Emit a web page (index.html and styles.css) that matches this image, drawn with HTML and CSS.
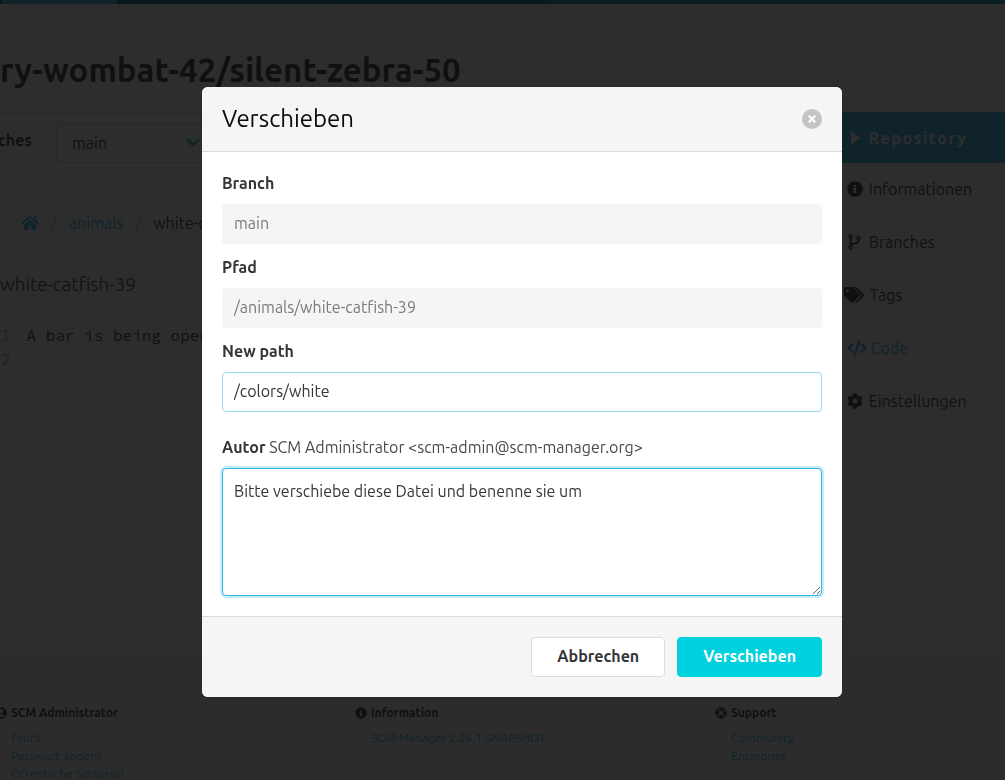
FILE: index.html
```html
<!DOCTYPE html>
<html lang="de">
<head>
<meta charset="utf-8">
<meta name="viewport" content="width=device-width, initial-scale=1">
<title>Verschieben</title>
<link rel="stylesheet" href="styles.css">
</head>
<body>
<div class="page">
  <div class="topbar"><div class="topbar-active"></div></div>
  <main class="main">
    <h1 class="title">ry-wombat-42/silent-zebra-50</h1>
    <div class="columns">
      <div class="content">
        <div class="branchbar">
          <label class="branch-label" for="branch-select">ches</label>
          <div class="select-wrap">
            <select class="branch-select" id="branch-select"><option>main</option></select>
            <svg class="chevron" viewBox="0 0 14 10" aria-hidden="true"><path d="M2 2.2 7 7.2 12 2.2" fill="none" stroke="currentColor" stroke-width="3" stroke-linecap="round" stroke-linejoin="round"/></svg>
          </div>
        </div>
        <section class="panel">
          <nav class="breadcrumb">
            <a href="#" aria-label="Start"><svg class="home" viewBox="0 0 576 512" aria-hidden="true"><path fill="currentColor" d="M280.4 148.300 96 300.100V464a16 16 0 0 0 16 16l112-.3a16 16 0 0 0 16-16V368a16 16 0 0 1 16-16h64a16 16 0 0 1 16 16v95.600a16 16 0 0 0 16 16l112 .4a16 16 0 0 0 16-16V300L295.700 148.300a12.200 12.200 0 0 0-15.300 0zM571.600 251.500 488 182.600V44a12 12 0 0 0-12-12h-56a12 12 0 0 0-12 12v72.600L318.500 43a48 48 0 0 0-61 0L4.300 251.500a12 12 0 0 0-1.600 16.900l25.500 31a12 12 0 0 0 16.900 1.600l235.200-193.700a12.200 12.200 0 0 1 15.300 0L530.900 301a12 12 0 0 0 16.900-1.600l25.500-31a12 12 0 0 0-1.700-16.900z"/></svg></a>
            <span class="slash">/</span>
            <a href="#">animals</a>
            <span class="slash">/</span>
            <span>white-catfish-39</span>
          </nav>
          <h2 class="filename">white-catfish-39</h2>
          <ol class="code">
            <li class="code-line"><span class="lineno">1</span><code>A bar is being opened</code></li>
            <li class="code-line"><span class="lineno">2</span><code></code></li>
          </ol>
        </section>
      </div>
      <aside class="sidebar">
        <h2 class="menu-title"><svg class="caret" viewBox="0 0 9 14" aria-hidden="true"><path fill="currentColor" d="M0 1v12q0 1 1 .6L8.500 7.600q.5-.6 0-1.200L1 .4Q0 0 0 1z"/></svg>Repository</h2>
        <nav class="menu">
          <a class="menu-item" href="#"><svg class="icon" viewBox="0 0 512 512" aria-hidden="true"><path fill="currentColor" d="M256 8a248 248 0 1 0 0 496 248 248 0 0 0 0-496zm0 110a42 42 0 1 1 0 84 42 42 0 0 1 0-84zm56 254a12 12 0 0 1-12 12h-88a12 12 0 0 1-12-12v-24a12 12 0 0 1 12-12h12v-64h-12a12 12 0 0 1-12-12v-24a12 12 0 0 1 12-12h64a12 12 0 0 1 12 12v100h12a12 12 0 0 1 12 12z"/></svg>Informationen</a>
          <a class="menu-item" href="#"><svg class="icon" viewBox="0 0 512 512" aria-hidden="true"><g fill="none" stroke="currentColor" stroke-width="46"><circle cx="116" cy="80" r="50"/><circle cx="116" cy="432" r="50"/><circle cx="366" cy="144" r="50"/><path stroke-width="60" d="M116 130v250M366 194c0 100-65 92-118 104-60 12-132 20-132 82"/></g></svg>Branches</a>
          <a class="menu-item" href="#"><svg class="icon icon-tags" viewBox="0 0 640 512" aria-hidden="true"><path fill="currentColor" d="M497.900 225.900 286 14.100A48 48 0 0 0 252.100 0H48A48 48 0 0 0 0 48v204.100a48 48 0 0 0 14.100 33.900l211.800 211.900a48 48 0 0 0 67.900 0l204.100-204.100a48 48 0 0 0 0-67.900zM112 160a48 48 0 1 1 0-96 48 48 0 0 1 0 96zm513.900 133.800L421.800 497.900a48 48 0 0 1-67.800 0l-.4-.4L527.600 323.500a70 70 0 0 0 0-99L303.100 0H380.100A48 48 0 0 1 414 14.100l211.900 211.800a48 48 0 0 1 0 67.900z"/></svg>Tags</a>
          <a class="menu-item menu-item-active" href="#"><svg class="icon icon-code" viewBox="0 0 640 512" aria-hidden="true"><path fill="none" stroke="currentColor" stroke-width="76" stroke-linecap="round" stroke-linejoin="round" d="M170 140 45 256l125 116M470 140l125 116-125 116M385 40 255 472"/></svg>Code</a>
          <a class="menu-item" href="#"><svg class="icon" viewBox="0 0 512 512" aria-hidden="true"><path fill="currentColor" d="M487.400 315.700 444.800 291.100a192 192 0 0 0 0-70.200l42.600-24.600a12 12 0 0 0 5.500-14c-11.100-35.600-30-67.800-54.700-94.600a12 12 0 0 0-14.800-2.300l-42.600 24.600a189 189 0 0 0-60.800-35.100V25.800a12 12 0 0 0-9.400-11.700 250 250 0 0 0-109.200 0 12 12 0 0 0-9.400 11.700V75a195 195 0 0 0-60.800 35.100L88.700 85.500a12 12 0 0 0-14.800 2.300A247 247 0 0 0 19.200 182.400a12 12 0 0 0 5.500 14L67.300 221a192 192 0 0 0 0 70.200l-42.600 24.600a12 12 0 0 0-5.500 14c11.100 35.600 30 67.800 54.700 94.600a12 12 0 0 0 14.800 2.300l42.600-24.600a189 189 0 0 0 60.800 35.100v49.200a12 12 0 0 0 9.400 11.700 250 250 0 0 0 109.200 0 12 12 0 0 0 9.400-11.700v-49.200a195 195 0 0 0 60.800-35.100l42.600 24.600a12 12 0 0 0 14.800-2.300 247 247 0 0 0 54.700-94.600 12 12 0 0 0-5.100-14.100zM256 336a80 80 0 1 1 0-160 80 80 0 0 1 0 160z"/></svg>Einstellungen</a>
        </nav>
      </aside>
    </div>
  </main>
  <footer class="footer">
    <section class="footer-col">
      <h3 class="footer-title"><svg class="footer-icon" viewBox="0 0 496 512" aria-hidden="true"><path fill="currentColor" fill-rule="evenodd" d="M248 8a248 248 0 1 0 0 496 248 248 0 0 0 0-496zm0 80a92 92 0 1 1 0 184 92 92 0 0 1 0-184zM110 370q20-60 75-60 63 20 126 0 55 0 75 60-50 70-138 70t-138-70z"/></svg>SCM Administrator</h3>
      <a href="#">Profil</a>
      <a href="#">Passwort ändern</a>
      <a href="#">Öffentliche Schlüssel</a>
    </section>
    <section class="footer-col">
      <h3 class="footer-title"><svg class="footer-icon" viewBox="0 0 512 512" aria-hidden="true"><path fill="currentColor" d="M256 8a248 248 0 1 0 0 496 248 248 0 0 0 0-496zm0 110a42 42 0 1 1 0 84 42 42 0 0 1 0-84zm56 254a12 12 0 0 1-12 12h-88a12 12 0 0 1-12-12v-24a12 12 0 0 1 12-12h12v-64h-12a12 12 0 0 1-12-12v-24a12 12 0 0 1 12-12h64a12 12 0 0 1 12 12v100h12a12 12 0 0 1 12 12z"/></svg>Information</h3>
      <a href="#">SCM-Manager 2.26.1-SNAPSHOT</a>
    </section>
    <section class="footer-col footer-col-last">
      <h3 class="footer-title"><svg class="footer-icon" viewBox="0 0 512 512" aria-hidden="true"><circle cx="256" cy="256" r="164" fill="none" stroke="currentColor" stroke-width="136" stroke-dasharray="190 67.600" stroke-dashoffset="95"/><circle cx="256" cy="256" r="230" fill="none" stroke="currentColor" stroke-width="36"/><circle cx="256" cy="256" r="112" fill="none" stroke="currentColor" stroke-width="32"/></svg>Support</h3>
      <a href="#">Community</a>
      <a href="#">Enterprise</a>
    </section>
  </footer>
</div>
<div class="overlay">
  <form class="modal" role="dialog" aria-modal="true" aria-labelledby="modal-title">
    <header class="modal-head">
      <h2 class="modal-title" id="modal-title">Verschieben</h2>
      <button class="close" type="button" aria-label="Schließen"><svg viewBox="0 0 20 20" aria-hidden="true"><path d="M6.800 6.800 13.200 13.200M13.200 6.800 6.800 13.200" stroke="currentColor" stroke-width="2"/></svg></button>
    </header>
    <div class="modal-body">
      <div class="field">
        <label class="label" for="branch">Branch</label>
        <input class="input" id="branch" type="text" value="main" disabled>
      </div>
      <div class="field">
        <label class="label" for="path">Pfad</label>
        <input class="input" id="path" type="text" value="/animals/white-catfish-39" disabled>
      </div>
      <div class="field">
        <label class="label" for="new-path">New path</label>
        <input class="input" id="new-path" type="text" value="/colors/white">
      </div>
      <div class="commit">
        <label class="author" for="message"><strong>Autor</strong> SCM Administrator &lt;scm-admin@scm-manager.org&gt;</label>
        <textarea class="input message" id="message" rows="4">Bitte verschiebe diese Datei und benenne sie um</textarea>
      </div>
    </div>
    <footer class="modal-foot">
      <button class="button" type="button">Abbrechen</button>
      <button class="button button-primary" type="submit">Verschieben</button>
    </footer>
  </form>
</div>
<script src="focus.js"></script>
</body>
</html>
```
FILE: focus.js
```js
const message = document.getElementById("message");
message.focus();
message.setSelectionRange(message.value.length, message.value.length);
```
FILE: styles.css
```css
* { box-sizing: border-box; }

body {
  margin: 0;
  height: 100vh;
  overflow: hidden;
  background: #fff;
  color: #363636;
  font: 16px/24px Ubuntu, "Noto Sans", sans-serif;
}

h1, h2, h3 { margin: 0; }
a { color: #33b2e8; text-decoration: none; }
input, select, textarea, button { font: inherit; }

.topbar { height: 4px; padding-left: 2px; background: linear-gradient(90deg, #0a5a66, #0d9aa0); }
.topbar-active { width: 115px; height: 4px; background: #33b2e8; }

.main { padding-top: 48px; min-height: 651px; }
.title { font-size: 33px; line-height: 36px; font-weight: 700; color: #363636; }
.columns { display: flex; gap: 24px; margin-top: 24px; }
.content { flex: 1; min-width: 0; }

.branchbar {
  display: flex;
  align-items: center;
  gap: 24px;
  padding: 10px 0;
  border-top: 1px solid #dbdbdb;
  border-bottom: 1px solid #dbdbdb;
}
.branch-label { display: flex; justify-content: flex-end; width: 32px; font-weight: 700; padding-bottom: 6px; }
.select-wrap { display: flex; align-items: center; width: 144px; }
.branch-select {
  flex: 1;
  height: 40px;
  padding: 0 15px;
  border: 1px solid #99d8f3;
  border-radius: 4px;
  background: #fff;
  color: #363636;
  appearance: none;
}
.chevron { flex: none; width: 14px; height: 10px; margin-left: -30px; color: #33b2e8; }

.panel { margin-top: 20px; border-top: 1px solid #dbdbdb; border-bottom: 1px solid #dbdbdb; }
.breadcrumb { display: flex; align-items: center; gap: 12px; height: 58px; padding: 0 0 2px 21px; white-space: nowrap; }
.home { display: block; width: 18px; height: 16px; }
.slash { color: #b5b5b5; }
.filename {
  padding: 18px 0;
  border-top: 1px solid #f0f0f0;
  border-bottom: 1px solid #dbdbdb;
  font-size: 19px;
  font-weight: 300;
  line-height: 24px;
}
.code { margin: 0; padding: 8px 0 16px; list-style: none; font-family: "Source Code Pro", "Noto Sans Mono", "DejaVu Sans Mono", monospace; }
.code-line { display: flex; gap: 16px; padding-left: 1px; font-size: 16px; white-space: nowrap; overflow: hidden; }
.lineno { color: #a0a0a0; }
.code code { font-family: inherit; }

.sidebar { width: 24%; flex: none; }
.menu-title {
  display: flex;
  align-items: center;
  gap: 9px;
  height: 51px;
  padding-left: 87px;
  background: #33b2e8;
  color: #fff;
  font-size: 16px;
  letter-spacing: 0.1em;
}
.caret { width: 9px; height: 14px; }
.menu-item {
  display: flex;
  align-items: center;
  gap: 6px;
  height: 53px;
  padding-left: 83px;
  border-bottom: 1px solid #f5f5f5;
  color: #363636;
}
.menu-item-active { gap: 4px; color: #33b2e8; }
.icon { width: 16px; height: 16px; flex: none; }
.icon-tags, .icon-code { width: 20px; }
.icon-tags { margin-left: -3px; }

.footer {
  display: flex;
  min-height: 150px;
  padding-top: 49px;
  background: #f5f5f5;
  font-size: 12px;
  line-height: 18px;
}
.footer-col { display: flex; flex-direction: column; flex: none; width: 360px; padding-left: 11px; }
.footer-col-last { flex: 1; }
.footer-title { display: flex; align-items: center; gap: 4px; margin: 0 0 7px -16px; font-size: 12px; line-height: 18px; }
.footer-icon { width: 12px; height: 12px; }

.overlay {
  position: fixed;
  inset: 0;
  display: flex;
  align-items: center;
  justify-content: center;
  padding: 4px 0 0 39px;
  background: rgba(10, 10, 10, .86);
}
.modal { width: 640px; max-width: 100%; border-radius: 6px; overflow: hidden; background: #fff; }
.modal-head {
  display: flex;
  align-items: center;
  justify-content: space-between;
  padding: 20px;
  border-bottom: 1px solid #dbdbdb;
  background: #f5f5f5;
}
.modal-title { font-size: 24px; line-height: 24px; font-weight: 400; color: #0a0a0a; }
.close { width: 20px; height: 20px; padding: 0; border: 0; border-radius: 50%; background: #c4c4c4; color: #fff; }
.close svg { display: block; width: 20px; height: 20px; }
.modal-body { padding: 19px 20px 20px; }
.field { margin-bottom: 11px; }
.label { display: block; margin-bottom: 9px; font-weight: 700; }
.input {
  display: block;
  width: 100%;
  height: 40px;
  padding: 6px 11px 8px;
  border: 1px solid #99d8f3;
  border-radius: 4px;
  background: #fff;
  color: #363636;
}
.input:disabled { border-color: #f5f5f5; background: #f5f5f5; color: #7a7a7a; }
.commit { padding-top: 12px; }
.author { display: block; margin-bottom: 9px; color: #4a4a4a; }
.author strong { color: #363636; }
.message { height: 128px; padding: 10px 11px; resize: vertical; }
.message:focus { outline: none; border-color: #33b2e8; box-shadow: 0 0 0 2px rgba(51, 178, 232, .25); }
.modal-foot {
  display: flex;
  justify-content: flex-end;
  gap: 12px;
  padding: 20px;
  border-top: 1px solid #dbdbdb;
  background: #f5f5f5;
}
.button {
  height: 40px;
  padding: 0 25px 2px;
  border: 1px solid #dbdbdb;
  border-radius: 4px;
  background: #fff;
  color: #363636;
  font-weight: 700;
}
.button-primary { border-color: #00d1df; background: #00d1df; color: #fff; }
```
